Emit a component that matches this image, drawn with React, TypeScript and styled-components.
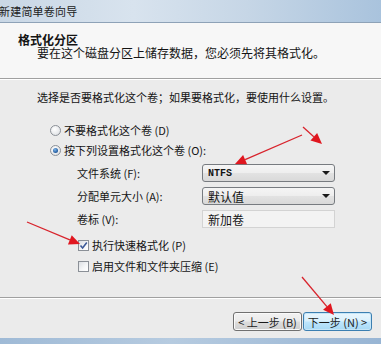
import React from "react";
import styled, { createGlobalStyle } from "styled-components";

const GlobalStyle = createGlobalStyle`
  html, body {
    margin: 0;
    padding: 0;
    background: #ebebeb;
    overflow: hidden;
  }
`;

const Window = styled.div`
  position: relative;
  width: 381px;
  height: 344px;
  display: flex;
  flex-direction: column;
  overflow: hidden;
  background: #ebebeb;
  color: #141414;
  font-family: "Noto Sans CJK SC", "Noto Sans", sans-serif;
  font-size: 11px;
`;

const TitleBar = styled.div`
  height: 22px;
  flex: none;
  display: flex;
  align-items: center;
  border-bottom: 1px solid #8ea2b7;
  background: linear-gradient(
    90deg,
    #c9d7e5 0%,
    #d8e3ee 35%,
    #c6d6e6 65%,
    #a9c3dd 100%
  );
`;

const TitleText = styled.span`
  margin-left: -1px;
  font-size: 11px;
  color: #202020;
  letter-spacing: 0.2px;
`;

const Header = styled.div`
  height: 55px;
  flex: none;
  box-sizing: border-box;
  padding: 11px 0 0 18px;
  background: #f7f7f7;
`;

const HeadTitle = styled.div`
  font-size: 12px;
  font-weight: bold;
  line-height: 12px;
`;

const HeadSub = styled.div`
  margin: 1px 0 0 19px;
  font-size: 12px;
  line-height: 12px;
`;

const Divider = styled.div`
  flex: none;
  height: 0;
  border-top: 1px solid #a0a0a0;
  border-bottom: 1px solid #ffffff;
`;

const Body = styled.div`
  flex: 1;
  display: flex;
  flex-direction: column;
  padding-left: 37px;
`;

const Intro = styled.div`
  margin-top: 11px;
  line-height: 12px;
`;

const OptionRow = styled.label<{ $top: number; $indent: number }>`
  display: flex;
  align-items: center;
  gap: 3px;
  height: 16px;
  margin-top: ${p => p.$top}px;
  margin-left: ${p => p.$indent}px;
`;

const Radio = styled.span<{ $checked?: boolean }>`
  position: relative;
  width: 11px;
  height: 11px;
  box-sizing: border-box;
  border-radius: 50%;
  border: 1px solid #8b9097;
  background: radial-gradient(circle at 40% 35%, #ffffff 0%, #e4e6e9 70%, #d0d4d9 100%);

  &::after {
    content: "";
    display: ${p => (p.$checked ? "block" : "none")};
    position: absolute;
    left: 2px;
    top: 2px;
    width: 5px;
    height: 5px;
    border-radius: 50%;
    background: radial-gradient(circle at 40% 35%, #7fb6e8 0%, #2a64a8 60%, #1b3f75 100%);
  }
`;

const CheckBox = styled.span`
  display: flex;
  align-items: center;
  justify-content: center;
  width: 11px;
  height: 11px;
  box-sizing: border-box;
  border: 1px solid #8b9097;
  background: linear-gradient(135deg, #dcdfe3 0%, #f6f7f8 60%, #ffffff 100%);
`;

const FieldGrid = styled.div`
  display: grid;
  grid-template-columns: 125px 133px;
  grid-template-rows: 18px 18px 18px;
  row-gap: 5px;
  margin-top: 6px;
  margin-left: 40px;
`;

const FieldLabel = styled.div`
  display: flex;
  align-items: center;
`;

const Combo = styled.div<{ $mono?: boolean }>`
  display: flex;
  align-items: center;
  justify-content: space-between;
  box-sizing: border-box;
  padding: 0 4px 0 5px;
  border: 1px solid #777b80;
  border-radius: 3px;
  background: linear-gradient(#f5f5f5 0%, #eeeeee 48%, #e2e2e2 52%, #d9d9d9 100%);
  font-family: ${p =>
    p.$mono ? '"Liberation Mono", monospace' : '"Noto Sans CJK SC", sans-serif'};
  font-size: ${p => (p.$mono ? "10px" : "12px")};
  font-weight: ${p => (p.$mono ? "bold" : "normal")};
`;

const ComboArrow = styled.span`
  width: 0;
  height: 0;
  border-left: 4px solid transparent;
  border-right: 4px solid transparent;
  border-top: 4px solid #1a1a1a;
`;

const TextBox = styled.div`
  display: flex;
  align-items: center;
  box-sizing: border-box;
  padding-left: 5px;
  border: 1px solid #d3d3d3;
  background: #f3f3f3;
  font-size: 12px;
`;

const ButtonBar = styled.div`
  height: 39px;
  flex: none;
  display: flex;
  justify-content: flex-end;
  align-items: flex-start;
  box-sizing: border-box;
  padding: 13px 9px 0 0;
  gap: 1px;
`;

const Button = styled.button<{ $default?: boolean }>`
  width: 69px;
  height: 19px;
  padding: 0;
  box-sizing: border-box;
  border-radius: 3px;
  font-family: "Noto Sans CJK SC", sans-serif;
  font-size: 11px;
  color: #1b1b1b;
  border: 1px solid ${p => (p.$default ? "#3c7fb1" : "#707070")};
  background: ${p =>
    p.$default
      ? "linear-gradient(#eaf6fd 0%, #d9f0fc 48%, #bee6fd 52%, #a7d9f5 100%)"
      : "linear-gradient(#f2f2f2 0%, #ebebeb 48%, #dddddd 52%, #cfcfcf 100%)"};
  box-shadow: inset 0 0 0 1px ${p => (p.$default ? "#c6e6f8" : "#fafafa")};
`;

const BottomStrip = styled.div`
  height: 6px;
  flex: none;
  background: linear-gradient(90deg, #9fbad6 0%, #b6cbe0 45%, #98b5d4 100%);
`;

const Overlay = styled.svg`
  position: absolute;
  left: 0;
  top: 0;
  pointer-events: none;
`;

type Arrow = [number, number, number, number];

const arrows: Arrow[] = [
  [303, 127, 322, 144],
  [302, 135, 235, 164],
  [27, 222, 80, 244],
  [302, 277, 334, 315],
];

const RedArrow: React.FC<{ a: Arrow }> = ({ a }) => {
  const [x1, y1, x2, y2] = a;
  const len = Math.hypot(x2 - x1, y2 - y1);
  const ux = (x2 - x1) / len;
  const uy = (y2 - y1) / len;
  const head = 11;
  const half = 5;
  const bx = x2 - ux * head;
  const by = y2 - uy * head;
  const pts = `${x2},${y2} ${bx - uy * half},${by + ux * half} ${bx + uy * half},${by - ux * half}`;
  return (
    <g>
      <line x1={x1} y1={y1} x2={bx} y2={by} stroke="#d8232c" strokeWidth={1.3} />
      <polygon points={pts} fill="#e0161f" />
    </g>
  );
};

const Check = () => (
  <svg width="9" height="9" viewBox="0 0 9 9">
    <path d="M1.5 4.5 L3.6 7 L7.8 1.5" fill="none" stroke="#3d5a98" strokeWidth="1.6" />
  </svg>
);

export default function App() {
  return (
    <Window>
      <GlobalStyle />
      <TitleBar>
        <TitleText>新建简单卷向导</TitleText>
      </TitleBar>
      <Header>
        <HeadTitle>格式化分区</HeadTitle>
        <HeadSub>要在这个磁盘分区上储存数据，您必须先将其格式化。</HeadSub>
      </Header>
      <Divider />
      <Body>
        <Intro>选择是否要格式化这个卷；如果要格式化，要使用什么设置。</Intro>
        <OptionRow $top={19} $indent={13}>
          <Radio />
          <span>不要格式化这个卷 (D)</span>
        </OptionRow>
        <OptionRow $top={4} $indent={13}>
          <Radio $checked />
          <span>按下列设置格式化这个卷 (O):</span>
        </OptionRow>
        <FieldGrid>
          <FieldLabel>文件系统 (F):</FieldLabel>
          <Combo $mono>
            NTFS
            <ComboArrow />
          </Combo>
          <FieldLabel>分配单元大小 (A):</FieldLabel>
          <Combo>
            默认值
            <ComboArrow />
          </Combo>
          <FieldLabel>卷标 (V):</FieldLabel>
          <TextBox>新加卷</TextBox>
        </FieldGrid>
        <OptionRow $top={9} $indent={41}>
          <CheckBox>
            <Check />
          </CheckBox>
          <span>执行快速格式化 (P)</span>
        </OptionRow>
        <OptionRow $top={5} $indent={41}>
          <CheckBox />
          <span>启用文件和文件夹压缩 (E)</span>
        </OptionRow>
      </Body>
      <Divider />
      <ButtonBar>
        <Button>&lt; 上一步 (B)</Button>
        <Button $default>下一步 (N) &gt;</Button>
      </ButtonBar>
      <BottomStrip />
      <Overlay width={381} height={344}>
        {arrows.map((a, i) => (
          <RedArrow key={i} a={a} />
        ))}
      </Overlay>
    </Window>
  );
}
